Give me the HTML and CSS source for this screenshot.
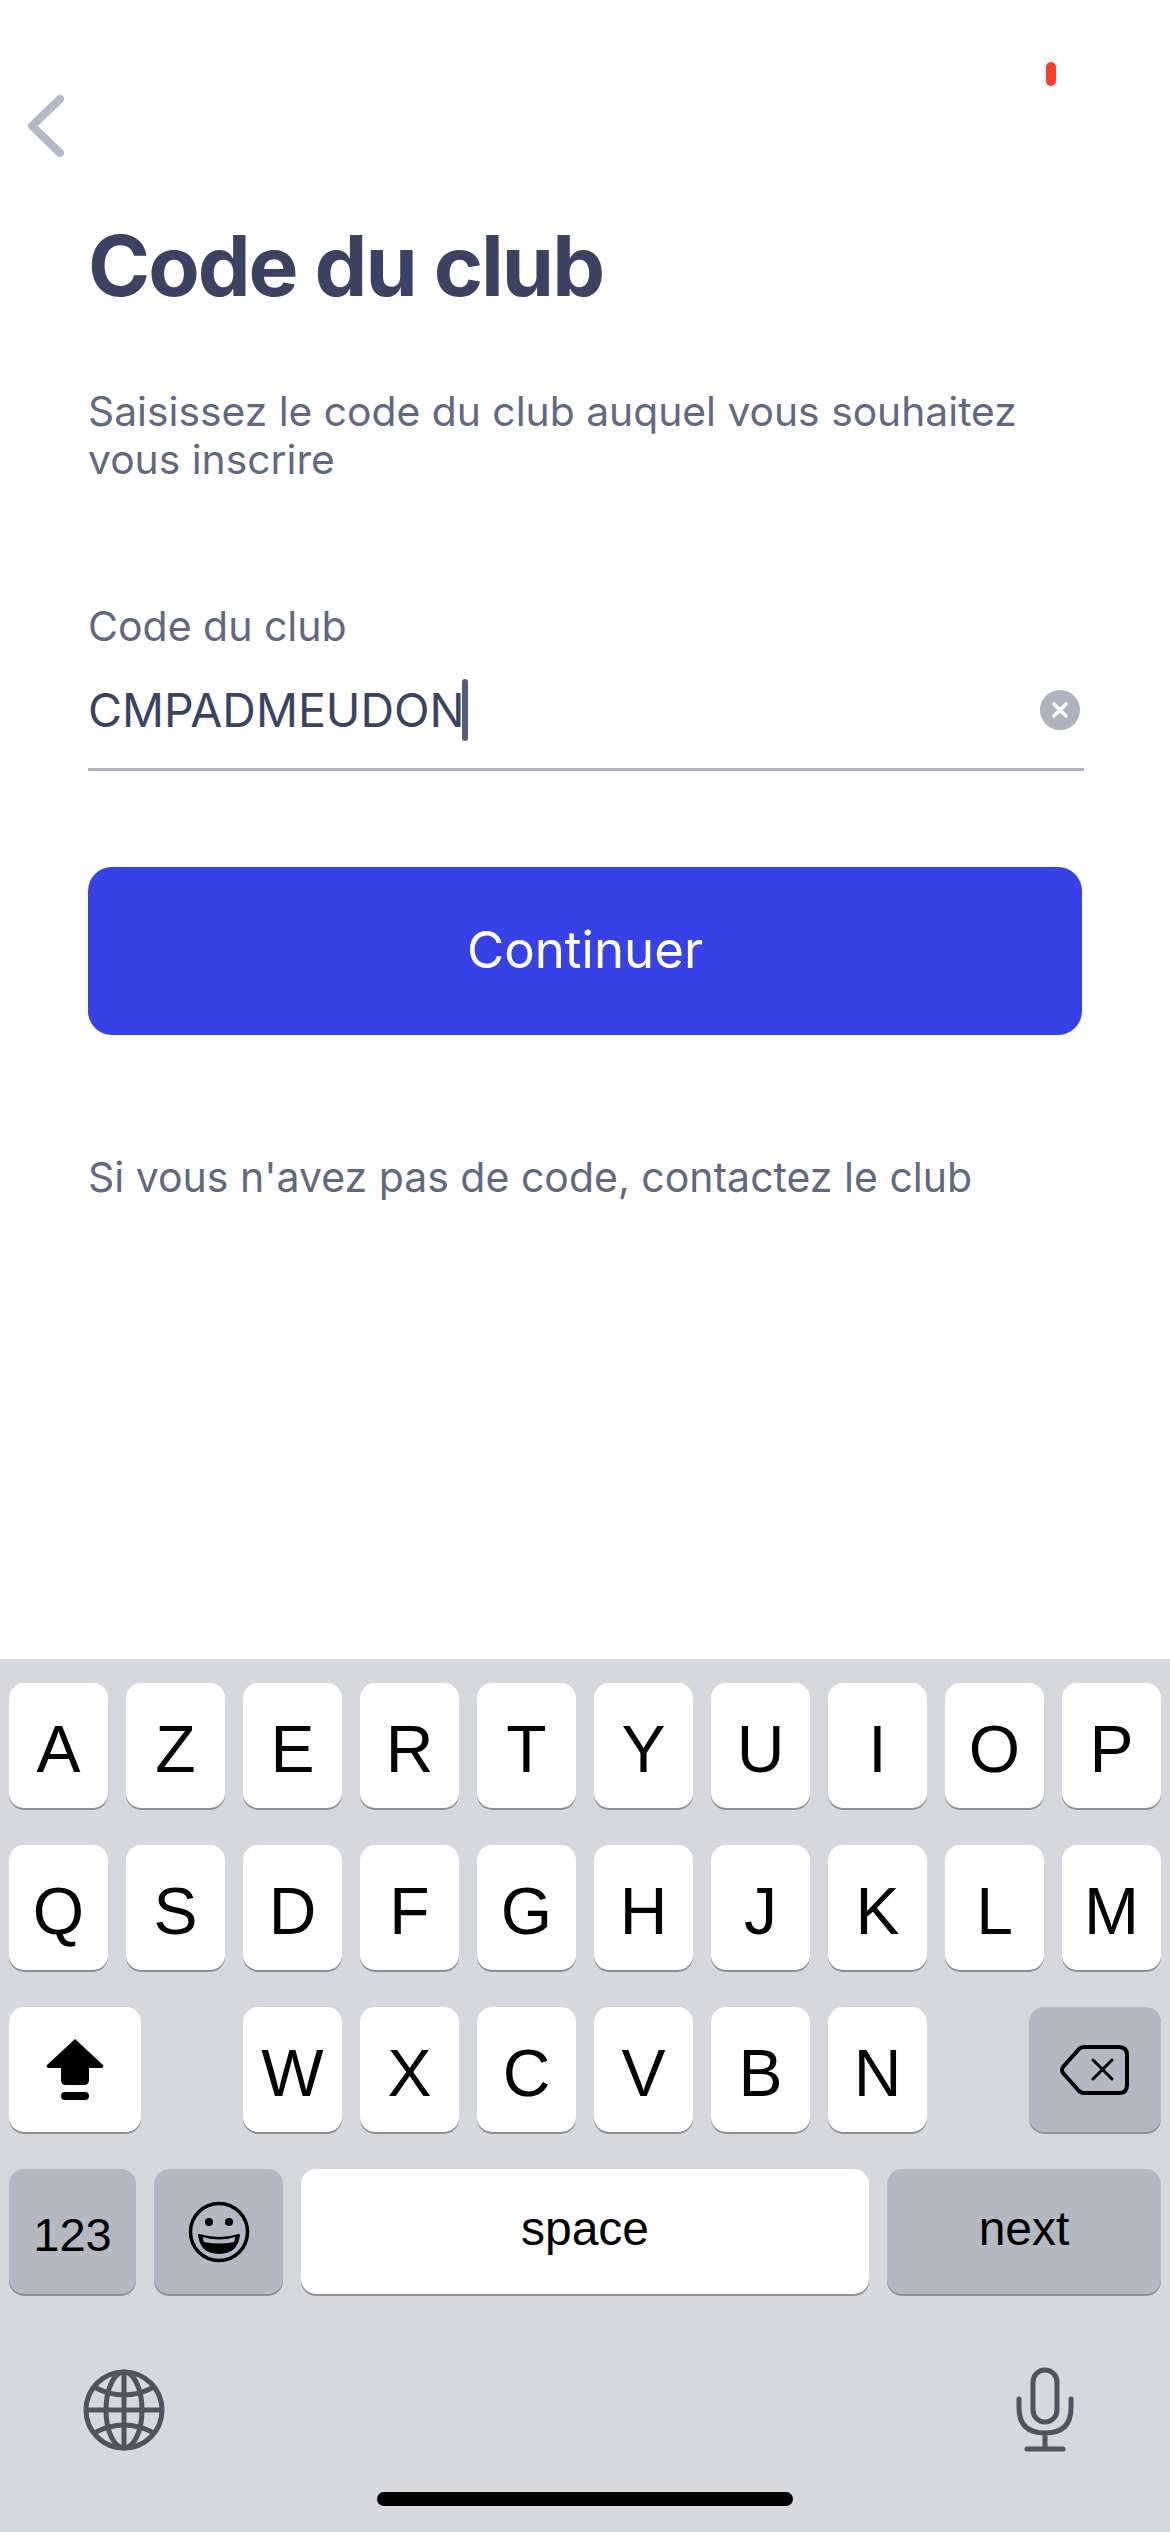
FILE: index.html
```html
<!DOCTYPE html>
<html lang="fr">
<head>
    <meta charset="UTF-8">
    <meta name="viewport" content="width=device-width, initial-scale=1.0">
    <title>Code du club</title>
    <link rel="stylesheet" href="styles.css">
</head>
<body>
    <main class="screen">
        <div class="status"><span class="status-dot"></span></div>
        <a class="back">
            <svg width="36" height="62" viewBox="0 0 36 62"><path d="M32 4 L4 31 L32 58" fill="none" stroke="#b5b8c8" stroke-width="8" stroke-linecap="round" stroke-linejoin="round"/></svg>
        </a>
        <section class="content">
            <h1 class="title">Code du club</h1>
            <p class="desc">Saisissez le code du club auquel vous souhaitez<br>vous inscrire</p>
            <label class="field-label">Code du club</label>
            <div class="field">
                <span class="field-value">CMPADMEUDON</span>
                <span class="caret"></span>
                <span class="clear">
                    <svg width="40" height="40" viewBox="0 0 40 40"><circle cx="20" cy="20" r="20" fill="#b0b2bf"/><path d="M14 14 L26 26 M26 14 L14 26" stroke="#fff" stroke-width="3.5" stroke-linecap="round"/></svg>
                </span>
            </div>
            <button class="btn">Continuer</button>
            <p class="hint">Si vous n'avez pas de code, contactez le club</p>
        </section>
    </main>

    <div class="keyboard">
        <div class="row">
            <div class="key">A</div><div class="key">Z</div><div class="key">E</div><div class="key">R</div><div class="key">T</div><div class="key">Y</div><div class="key">U</div><div class="key">I</div><div class="key">O</div><div class="key">P</div>
        </div>
        <div class="row">
            <div class="key">Q</div><div class="key">S</div><div class="key">D</div><div class="key">F</div><div class="key">G</div><div class="key">H</div><div class="key">J</div><div class="key">K</div><div class="key">L</div><div class="key">M</div>
        </div>
        <div class="row row-between">
            <div class="key key-shift">
                <svg width="58" height="63" viewBox="0 0 58 63"><path d="M29 1 L57 27 Q58 30 55 30 L43 30 L43 42 Q43 47 38 47 L20 47 Q15 47 15 42 L15 30 L3 30 Q0 30 1 27 Z" fill="#000"/><rect x="15" y="54" width="28" height="8" rx="4" fill="#000"/></svg>
            </div>
            <div class="letters">
                <div class="key">W</div><div class="key">X</div><div class="key">C</div><div class="key">V</div><div class="key">B</div><div class="key">N</div>
            </div>
            <div class="key key-shift key-dark">
                <svg width="70" height="52" viewBox="0 0 70 52"><path d="M24 3 H59 Q67 3 67 11 V41 Q67 49 59 49 H24 Q21 49 19 47 L3 29 Q1 26 3 23 L19 5 Q21 3 24 3 Z" fill="none" stroke="#000" stroke-width="4" stroke-linejoin="round"/><path d="M33 16 L52 35 M52 16 L33 35" stroke="#000" stroke-width="3" stroke-linecap="round"/></svg>
            </div>
        </div>
        <div class="row">
            <div class="key key-dark key-num">123</div>
            <div class="key key-dark key-emoji">
                <svg width="62" height="62" viewBox="0 0 62 62"><circle cx="31" cy="31" r="28.5" fill="none" stroke="#000" stroke-width="3.5"/><circle cx="21" cy="21" r="4" fill="#000"/><circle cx="41" cy="21" r="4" fill="#000"/><path d="M11 34 Q31 40 51 34 Q49 52 31 52 Q13 52 11 34 Z" fill="#000" stroke="#000" stroke-width="2" stroke-linejoin="round"/><path d="M15 36 Q31 41 47 36 Q47 39 46 41 Q31 44 16 41 Q15 39 15 36 Z" fill="#b3b8c3"/></svg>
            </div>
            <div class="key key-space">space</div>
            <div class="key key-dark key-next">next</div>
        </div>
        <div class="kb-tools">
            <svg width="82" height="82" viewBox="0 0 82 82" fill="none" stroke="#50545e" stroke-width="5"><circle cx="41" cy="41" r="38"/><ellipse cx="41" cy="41" rx="18" ry="38"/><path d="M41 3 V79 M3 41 H79 M11 18 Q41 34 71 18 M11 64 Q41 48 71 64"/></svg>
            <svg width="58" height="86" viewBox="0 0 58 86" fill="none" stroke="#50545e" stroke-width="5" stroke-linecap="round"><rect x="17" y="3" width="24" height="52" rx="12"/><path d="M3 32 V41 Q3 66 29 66 Q55 66 55 41 V32 M29 66 V82 M11 82 H47"/></svg>
        </div>
        <div class="home-bar"></div>
    </div>
</body>
</html>
```

FILE: styles.css
```css
*{box-sizing:border-box;}
html,body{margin:0;padding:0;}
body{width:1170px;height:2532px;background:#fff;font-family:"Inter","Liberation Sans",sans-serif;overflow:hidden;}

.screen{height:1659px;}
.status{height:95px;padding:62px 114px 0 0;display:flex;justify-content:flex-end;}
.status-dot{width:10px;height:24px;border-radius:5px;background:#ff3b30;}
.back{display:block;height:62px;padding-left:28px;}
.back svg{display:block;}

.content{padding:0 86px 0 88px;}
.title{margin:61px 0 0;font-size:84px;line-height:96px;font-weight:700;color:#3c4262;letter-spacing:-2px;}
.desc{margin:73px 0 0;font-size:40.8px;line-height:48px;color:#636880;}
.field-label{display:block;margin-top:119px;font-size:41px;line-height:48px;color:#636880;}
.field{display:flex;align-items:center;height:107px;margin-top:14px;padding-bottom:12px;border-bottom:3px solid #b0b2bf;}
.field-value{font-size:46.5px;color:#3c4262;}
.caret{width:6px;height:62px;margin-left:-3px;border-radius:3px;background:#565c7a;}
.clear{margin-left:auto;margin-right:4px;height:40px;}
.clear svg{display:block;}

.btn{display:block;width:994px;height:168px;margin:96px 0 0;padding:0 0 4px;border:0;border-radius:24px;background:#3742e6;color:#fff;font-family:inherit;font-size:51px;}
.hint{margin:118px 0 0;font-size:41px;line-height:48px;color:#636880;}

.keyboard{height:873px;padding:24px 9px 0;background:#d6d8de;}
.row{display:flex;gap:18px;margin-bottom:37px;}
.row-between{justify-content:space-between;}
.letters{display:flex;gap:18px;}
.key{flex:none;display:flex;align-items:center;justify-content:center;width:99px;height:125px;padding-top:6px;border-radius:15px;background:#fff;box-shadow:0 2px 0 #8f9095;font-family:"Liberation Sans",sans-serif;font-size:66px;color:#000;}
.key-dark{background:#b3b8c3;}
.key-shift{width:132px;padding-top:0;}
.key-num{width:127px;font-size:47px;}
.key-emoji{width:129px;padding-top:0;}
.key-space{width:568px;font-size:48px;padding:0 0 6px;}
.key-next{width:274px;font-size:48px;padding:0 0 6px;}

.kb-tools{display:flex;justify-content:space-between;align-items:center;margin-top:73px;padding:0 87px 0 74px;height:86px;}
.home-bar{width:416px;height:14px;margin:39px auto 0;border-radius:7px;background:#000;}
```
